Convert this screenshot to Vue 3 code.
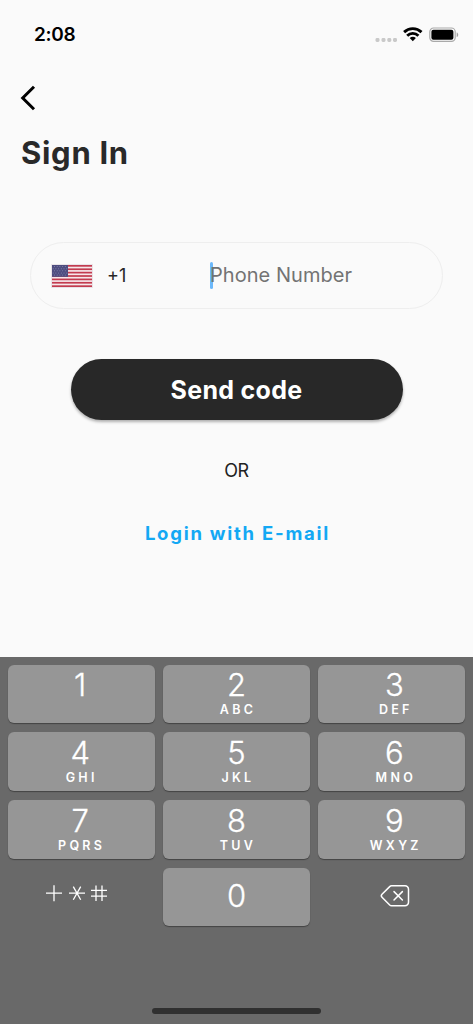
<script setup>
const keys = [
  { digit: '1', letters: '' },
  { digit: '2', letters: 'ABC' },
  { digit: '3', letters: 'DEF' },
  { digit: '4', letters: 'GHI' },
  { digit: '5', letters: 'JKL' },
  { digit: '6', letters: 'MNO' },
  { digit: '7', letters: 'PQRS' },
  { digit: '8', letters: 'TUV' },
  { digit: '9', letters: 'WXYZ' },
]
const starRows = [5, 6, 5, 6, 5]
const stars = starRows.flatMap((count, row) =>
  Array.from({ length: count }, (_, i) => ({
    x: 1.6 + i * 2.7 + (count === 5 ? 1.3 : 0),
    y: 1.8 + row * 2.1,
  })),
)
</script>

<template>
  <div class="screen">
    <header class="status">
      <span class="time">2:08</span>
      <div class="indicators">
        <svg class="signal" width="24" height="6" viewBox="0 0 24 6" fill="#c9c9c9">
          <rect x="0.5" y="1" width="4" height="4" rx="1.4" />
          <rect x="6.5" y="1" width="4" height="4" rx="1.4" />
          <rect x="12.3" y="1" width="4" height="4" rx="1.4" />
          <rect x="18" y="1" width="4" height="4" rx="1.4" />
        </svg>
        <svg class="wifi" width="20" height="15" viewBox="0 0 20 15" fill="none" stroke="#000" stroke-width="2.9">
          <path d="M1.1 5.1a12.7 12.7 0 0 1 17.4 0" />
          <path d="M4.2 8.7a8 8 0 0 1 11.2 0" />
          <path d="M9.8 14.2 6.7 11.1a4.5 4.5 0 0 1 6.2 0z" fill="#000" stroke="none" />
        </svg>
        <svg class="battery" width="31" height="16" viewBox="0 0 31 16">
          <rect x="0.8" y="1" width="25.4" height="13.4" rx="3.8" fill="none" stroke="#a9a9a9" stroke-width="1.2" />
          <rect x="2.4" y="2.7" width="22" height="10" rx="2" fill="#000" />
          <path d="M27.7 5.4c2 .7 2 4 0 4.7z" fill="#a0a0a0" />
        </svg>
      </div>
    </header>

    <main class="content">
      <button class="back" aria-label="Back">
        <svg width="18" height="28" viewBox="0 0 18 28" fill="none" stroke="#000" stroke-width="3">
          <path d="M14 2.7 2.7 14 14 25.3" />
        </svg>
      </button>
      <h1 class="title">Sign In</h1>

      <div class="field">
        <svg class="flag" width="42" height="24" viewBox="0 0 42 24">
          <rect width="42" height="24" fill="#e9e4e8" />
          <rect x="1" y="1" width="40" height="22" fill="#f6e7ea" />
          <rect
            v-for="n in 7"
            :key="n"
            x="1"
            :y="1 + (n - 1) * 3.385"
            width="40"
            height="1.7"
            fill="#c23b4f"
          />
          <rect x="1" y="1" width="16" height="11.8" fill="#4e4d80" />
          <circle v-for="(star, i) in stars" :key="i" :cx="star.x + 0.6" :cy="star.y + 0.8" r="0.5" fill="#8b8bb0" />
        </svg>
        <span class="prefix">+1</span>
        <div class="number"><i class="caret"></i><span class="placeholder">Phone Number</span></div>
      </div>

      <button class="send"><span>Send code</span></button>
      <p class="or">OR</p>
      <a class="email">Login with E-mail</a>
    </main>

    <section class="keypad">
      <div class="keys">
        <div v-for="key in keys" :key="key.digit" class="key">
          <span class="digit">{{ key.digit }}</span>
          <span class="letters">{{ key.letters }}</span>
        </div>
        <div class="plain">
          <svg class="symbols" width="64" height="20" viewBox="0 0 64 20" fill="none" stroke="#fff" stroke-width="1.3">
            <path d="M1 10.2h16M9 2.2v16" />
            <path d="M24 10.2h16M28.3 3.6l7.4 13.2M35.7 3.6l-7.4 13.2" />
            <path d="M46 7.3h16M46 13.2h16M51 2.5v15.6M57 2.5v15.6" />
          </svg>
        </div>
        <div class="key zero"><span class="digit">0</span></div>
        <div class="plain">
          <svg class="erase" width="30" height="24" viewBox="0 0 30 24" fill="none" stroke="#fff" stroke-width="1.5" stroke-linejoin="round" stroke-linecap="round">
            <path d="M11.5 1.8H25a3.5 3.5 0 0 1 3.5 3.5v13a3.5 3.5 0 0 1-3.5 3.5H11.5q-1 0-1.8-.8L2 13.3q-1.5-1.5 0-3L9.7 2.6q.8-.8 1.8-.8z" />
            <path d="m14 7.6 8.4 8.4M22.4 7.6 14 16" />
          </svg>
        </div>
      </div>
      <div class="home"></div>
    </section>
  </div>
</template>

<style>
body {
  background: #fafafa;
}
</style>

<style scoped>
.screen {
  width: 473px;
  height: 1024px;
  display: flex;
  flex-direction: column;
  overflow: hidden;
  background: #fafafa;
  font-family: Inter, "Liberation Sans", sans-serif;
}
button {
  border: 0;
  padding: 0;
  background: none;
  font-family: inherit;
}
.status {
  height: 68px;
  flex: none;
  box-sizing: border-box;
  padding: 0 13px 0 34px;
  display: flex;
  align-items: center;
  justify-content: space-between;
}
.time {
  font-size: 19px;
  line-height: 24px;
  font-weight: 600;
  letter-spacing: -0.3px;
  padding-top: 2px;
  color: #000;
}
.indicators {
  display: flex;
  align-items: center;
}
.signal {
  margin: 11px 4px 0 0;
}
.wifi {
  margin-right: 6px;
}
.battery {
  margin-top: 1px;
}
.content {
  height: 589px;
  flex: none;
  display: flex;
  flex-direction: column;
  align-items: center;
}
.back {
  width: 18px;
  height: 28px;
  margin: 16px 0 0 20px;
  align-self: flex-start;
  display: flex;
}
.title {
  margin: 21px 0 0 21px;
  align-self: flex-start;
  font-size: 31px;
  line-height: 40px;
  font-weight: 700;
  letter-spacing: 0.7px;
  color: #292929;
}
.field {
  width: 413px;
  height: 67px;
  margin-top: 69px;
  box-sizing: border-box;
  border: 1px solid #eeeeee;
  border-radius: 34px;
  display: flex;
  align-items: center;
  padding-left: 20px;
}
.prefix {
  width: 103px;
  margin-left: 14px;
  font-size: 18px;
  line-height: 24px;
  color: #262626;
}
.number {
  display: flex;
  align-items: center;
  height: 27px;
}
.caret {
  width: 3px;
  height: 27px;
  border-radius: 2px;
  background: #6bb8fb;
  margin-right: -3px;
}
.placeholder {
  font-size: 20px;
  line-height: 26px;
  letter-spacing: 0.05px;
  margin-bottom: 2px;
  color: #737373;
}
.send {
  width: 332px;
  height: 61px;
  margin-top: 50px;
  border-radius: 31px;
  background: #282828;
  box-shadow: 0 2px 3px rgba(0, 0, 0, 0.3);
  color: #fff;
  font-size: 25px;
  line-height: 32px;
  font-weight: 700;
  letter-spacing: 0.3px;
}
.or {
  margin: 39px 0 0;
  font-size: 18px;
  line-height: 24px;
  letter-spacing: -0.3px;
  color: #222;
}
.email {
  margin-top: 37px;
  margin-left: 2px;
  font-size: 18.5px;
  line-height: 26px;
  font-weight: 700;
  letter-spacing: 1.75px;
  color: #13a8f4;
}
.keypad {
  flex: 1;
  background: #696969;
  display: flex;
  flex-direction: column;
  align-items: center;
}
.keys {
  width: 458px;
  margin-top: 8px;
  display: grid;
  grid-template-columns: repeat(3, 1fr);
  grid-template-rows: 58px 59px 59px 58px;
  gap: 9px 8px;
}
.key {
  box-sizing: border-box;
  display: flex;
  flex-direction: column;
  align-items: center;
  border-radius: 6px;
  background: #969696;
  box-shadow: 0 1px 1px #444;
  color: #fff;
}
.key:nth-child(3n + 1) {
  padding-right: 2px;
}
.key:nth-child(3n) {
  padding-left: 5px;
}
.digit {
  font-size: 31px;
  line-height: 36px;
  margin-top: 2px;
  font-weight: 300;
  -webkit-text-stroke: 0.3px #fff;
}
.letters {
  font-size: 12.5px;
  line-height: 14px;
  font-weight: 600;
  letter-spacing: 3.3px;
  margin-right: -3px;
}
.key:nth-child(n + 4) .digit {
  margin-top: 3px;
}
.key.zero .digit {
  margin-top: 10px;
}
.plain {
  display: flex;
  align-items: center;
  justify-content: center;
}
.symbols {
  margin: 0 8px 8px 0;
}
.erase {
  margin: 0 0 2px 6px;
}
.home {
  width: 169px;
  height: 6px;
  margin-top: 82px;
  border-radius: 3px;
  background: #303030;
}
</style>
